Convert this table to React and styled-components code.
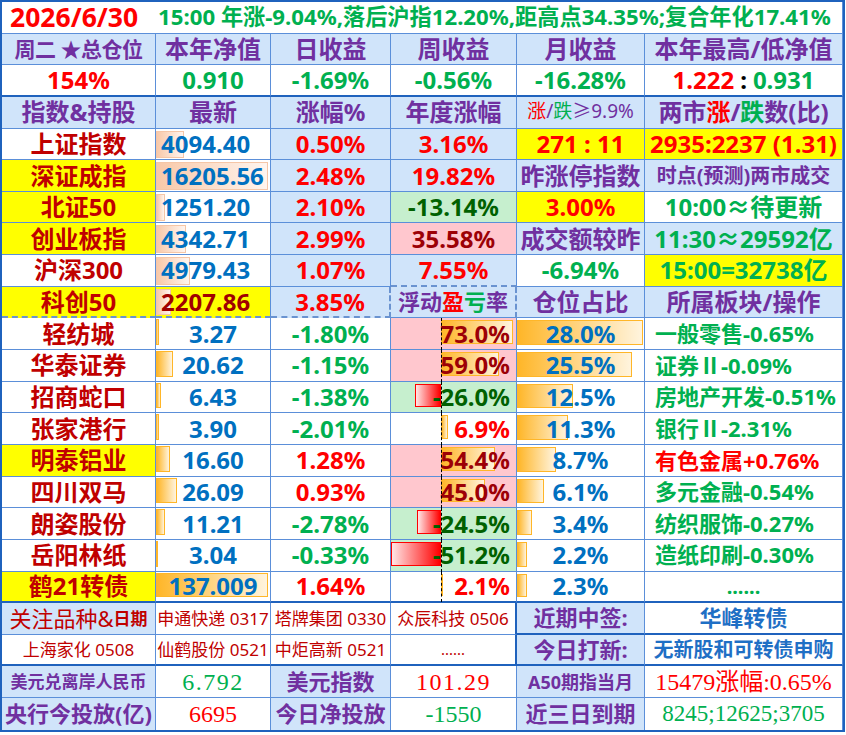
import React from 'react';
import styled, { createGlobalStyle } from 'styled-components';

// #region colours
const LINE = '#5b8fd9';
const EDGE = '#1f62bd';
const DASH = '#6a93d0';
const HEAD = '#d0e4fa';
const YELLOW = '#ffff00';
const WHITE = '#ffffff';
const PURPLE = '#7030a0';
const RED = '#ff0000';
const DARKRED = '#c00000';
const MAROON = '#a00000';
const GREEN = '#00b050';
const BLUE = '#0070c0';
const NAVY = '#1f6fc5';
const PINK_BG = '#ffc7ce';
const PINK_TXT = '#9c0006';
const MINT_BG = '#c6efce';
const MINT_TXT = '#006100';

const SANS = '"Noto Sans", "Noto Sans CJK SC", sans-serif';
const SERIF = '"Liberation Serif", "Noto Sans CJK SC", serif';
// #endregion

// #region data
const summaryHeads = ['本年净值', '日收益', '周收益', '月收益'];
const summaryValues = ['0.910', '-1.69%', '-0.56%', '-16.28%'];

const indexRows = [
  {
    name: '上证指数', nameBg: WHITE, last: '4094.40', chg: '0.50%',
    ytd: { text: '3.16%', bg: HEAD, color: RED },
    c5: { text: '271 : 11', bg: YELLOW, color: RED },
    c6: { text: '2935:2237 (1.31)', bg: YELLOW, color: RED },
  },
  {
    name: '深证成指', nameBg: YELLOW, last: '16205.56', chg: '2.48%',
    ytd: { text: '19.82%', bg: HEAD, color: RED },
    c5: { text: '昨涨停指数', bg: HEAD, color: PURPLE },
    c6: { text: '时点(预测)两市成交', bg: HEAD, color: PURPLE, size: 20 },
  },
  {
    name: '北证50', nameBg: YELLOW, last: '1251.20', chg: '2.10%',
    ytd: { text: '-13.14%', bg: MINT_BG, color: MINT_TXT },
    c5: { text: '3.00%', bg: YELLOW, color: RED },
    c6: { text: '10:00≈待更新', bg: WHITE, color: GREEN },
  },
  {
    name: '创业板指', nameBg: YELLOW, last: '4342.71', chg: '2.99%',
    ytd: { text: '35.58%', bg: PINK_BG, color: PINK_TXT },
    c5: { text: '成交额较昨', bg: HEAD, color: PURPLE },
    c6: { text: '11:30≈29592亿', bg: HEAD, color: GREEN },
  },
  {
    name: '沪深300', nameBg: WHITE, last: '4979.43', chg: '1.07%',
    ytd: { text: '7.55%', bg: HEAD, color: RED },
    c5: { text: '-6.94%', bg: WHITE, color: GREEN },
    c6: { text: '15:00=32738亿', bg: YELLOW, color: GREEN },
  },
];

const holdings = [
  { name: '轻纺城', bg: WHITE, price: '3.27', chg: '-1.80%', pnl: 73.0, weight: 28.0, sector: '一般零售-0.65%' },
  { name: '华泰证券', bg: WHITE, price: '20.62', chg: '-1.15%', pnl: 59.0, weight: 25.5, sector: '证券Ⅱ-0.09%' },
  { name: '招商蛇口', bg: WHITE, price: '6.43', chg: '-1.38%', pnl: -26.0, weight: 12.5, sector: '房地产开发-0.51%' },
  { name: '张家港行', bg: WHITE, price: '3.90', chg: '-2.01%', pnl: 6.9, weight: 11.3, sector: '银行Ⅱ-2.31%' },
  { name: '明泰铝业', bg: YELLOW, price: '16.60', chg: '1.28%', pnl: 54.4, weight: 8.7, sector: '有色金属+0.76%' },
  { name: '四川双马', bg: WHITE, price: '26.09', chg: '0.93%', pnl: 45.0, weight: 6.1, sector: '多元金融-0.54%' },
  { name: '朗姿股份', bg: WHITE, price: '11.21', chg: '-2.78%', pnl: -24.5, weight: 3.4, sector: '纺织服饰-0.27%' },
  { name: '岳阳林纸', bg: WHITE, price: '3.04', chg: '-0.33%', pnl: -51.2, weight: 2.2, sector: '造纸印刷-0.30%' },
  { name: '鹤21转债', bg: YELLOW, price: '137.009', chg: '1.64%', pnl: 2.1, weight: 2.3, sector: '......' },
];

const macroRows = [
  [
    { text: '美元兑离岸人民币', size: 17 },
    { text: '6.792', color: GREEN, track: 1.5 },
    { text: '美元指数', size: 22 },
    { text: '101.29', color: RED, track: 1.5 },
    { text: 'A50期指当月', size: 18 },
    { text: '15479涨幅:0.65%', color: RED },
  ],
  [
    { text: '央行今投放(亿)', size: 22 },
    { text: '6695', color: RED },
    { text: '今日净投放', size: 22 },
    { text: '-1550', color: GREEN },
    { text: '近三日到期', size: 22 },
    { text: '8245;12625;3705', color: GREEN, size: 23 },
  ],
];
// #endregion

// #region styled components
const GlobalStyle = createGlobalStyle`
  html, body { margin: 0; padding: 0; background: #fff; }
  body { font-family: ${SANS}; }
`;

const Sheet = styled.div`
  display: grid;
  grid-template-columns: 154px 115px 120px 126px 128px 198px;
  grid-auto-rows: 31.65px;
  width: max-content;
  border: 2px solid ${EDGE};
`;

const borderFor = kind => {
  switch (kind) {
    case 'thick':
      return `2px solid ${EDGE}`;
    case 'dash':
      return `2px dashed ${DASH}`;
    case 'none':
      return 'none';
    default:
      return `1px solid ${LINE}`;
  }
};

const Cell = styled.div`
  position: relative;
  box-sizing: border-box;
  min-width: 0;
  grid-column: span ${p => p.$span || 1};
  display: flex;
  align-items: center;
  justify-content: ${p => p.$align || 'center'};
  gap: ${p => p.$gap || 0}px;
  padding: ${p => p.$pad || '0'};
  background: ${p => p.$bg || WHITE};
  color: ${p => p.$color || '#000'};
  font-family: ${p => (p.$serif ? SERIF : SANS)};
  font-size: ${p => p.$size || 24}px;
  font-weight: ${p => p.$weight || 700};
  line-height: 1.25;
  white-space: nowrap;
  border-right: ${p => borderFor(p.$br)};
  border-bottom: ${p => borderFor(p.$bb)};
`;

const PnlCell = styled(Cell)`
  &::before {
    content: '';
    position: absolute;
    left: 50px;
    top: 0;
    bottom: -1px;
    border-left: 1px dashed #000;
    z-index: 2;
  }
`;

const Label = styled.span`
  position: relative;
  z-index: 1;
  letter-spacing: ${p => p.$track || 0}px;
`;

const Tint = styled.span`
  color: ${p => p.$color || 'inherit'};
  font-size: ${p => (p.$size ? `${p.$size}px` : 'inherit')};
  font-weight: ${p => p.$weight || 'inherit'};
`;

const BAR_FILL = {
  peach: ['#f8c8a8', '#fff5ef', '#f5c6a7'],
  orange: ['#ffb628', '#fff4de', '#ffb628'],
  loss: ['#ffe6e6', '#ff0000', '#ff0000'],
};

const Bar = styled.span`
  position: absolute;
  top: ${p => p.$top}px;
  bottom: ${p => p.$bottom}px;
  box-sizing: border-box;
  background: linear-gradient(
    to right,
    ${p => BAR_FILL[p.$tone][0]},
    ${p => BAR_FILL[p.$tone][1]}
  );
  border: 1px solid ${p => BAR_FILL[p.$tone][2]};
`;
// #endregion

const pnlTone = v => {
  if (v < 0) return { bg: MINT_BG, color: MINT_TXT };
  if (v >= 10) return { bg: PINK_BG, color: PINK_TXT };
  return { bg: WHITE, color: RED };
};

function PnlBar({ value }) {
  const width = Math.abs(value) * 0.985;
  if (value < 0) {
    return <Bar $tone="loss" $top={2} $bottom={5} style={{ right: 'calc(100% - 50px)', width }} />;
  }
  return <Bar $tone="orange" $top={2} $bottom={5} style={{ left: 50, width }} />;
}

function RiseFall({ children }) {
  return (
    <>
      <Tint $color={RED}>涨</Tint>/<Tint $color={GREEN}>跌</Tint>
      {children}
    </>
  );
}

export default function App() {
  return (
    <>
      <GlobalStyle />
      <Sheet>
        {/* title */}
        <Cell $span={6} $align="flex-start" $pad="0 0 0 8px" $gap={20} $color={GREEN} $size={22.2}>
          <Tint $color={RED} $size={26.5}>2026/6/30</Tint>
          <span>15:00 年涨-9.04%,落后沪指12.20%,距高点34.35%;复合年化17.41%</span>
        </Cell>

        {/* account summary */}
        <Cell $bg={HEAD} $color={PURPLE} $size={21}>
          <Label $track={-0.5}>周二 ★总仓位</Label>
        </Cell>
        {summaryHeads.map(h => (
          <Cell key={h} $bg={HEAD} $color={PURPLE}>{h}</Cell>
        ))}
        <Cell $bg={HEAD} $color={PURPLE}>本年最高/低净值</Cell>

        <Cell $color={RED} $bb="thick">154%</Cell>
        {summaryValues.map(v => (
          <Cell key={v} $color={GREEN} $bb="thick">{v}</Cell>
        ))}
        <Cell $bb="thick" $gap={6}>
          <Tint $color={RED}>1.222</Tint>:<Tint $color={GREEN}>0.931</Tint>
        </Cell>

        {/* indices */}
        <Cell $bg={HEAD} $color={PURPLE}>指数&amp;持股</Cell>
        <Cell $bg={HEAD} $color={PURPLE}>最新</Cell>
        <Cell $bg={HEAD} $color={PURPLE}>涨幅%</Cell>
        <Cell $bg={HEAD} $color={PURPLE}>年度涨幅</Cell>
        <Cell $bg={HEAD} $color={PURPLE} $size={19} $weight={400}>
          <RiseFall>≥9.9%</RiseFall>
        </Cell>
        <Cell $bg={HEAD} $color={PURPLE}>
          两市<RiseFall>数(比)</RiseFall>
        </Cell>

        {indexRows.map((row, i) => (
          <React.Fragment key={row.name}>
            <Cell $bg={row.nameBg} $color={DARKRED}>{row.name}</Cell>
            <Cell $align="flex-start" $pad="0 0 0 5px" $color={BLUE}>
              <Bar $tone="peach" $top={2} $bottom={1} style={{ left: 0, width: parseFloat(row.last) * 0.0069 }} />
              <Label>{row.last}</Label>
            </Cell>
            <Cell $bg={HEAD} $color={RED}>{row.chg}</Cell>
            <Cell $bg={row.ytd.bg} $color={row.ytd.color} $bb={i === indexRows.length - 1 ? 'dash' : undefined}>
              {row.ytd.text}
            </Cell>
            <Cell $bg={row.c5.bg} $color={row.c5.color}>{row.c5.text}</Cell>
            <Cell $bg={row.c6.bg} $color={row.c6.color} $size={row.c6.size}>{row.c6.text}</Cell>
          </React.Fragment>
        ))}

        <Cell $bg={YELLOW} $color={DARKRED} $bb="dash">科创50</Cell>
        <Cell $bg={YELLOW} $align="flex-start" $pad="0 0 0 5px" $color={MAROON} $bb="dash">
          <Bar $tone="peach" $top={2} $bottom={1} style={{ left: 0, width: 2207.86 * 0.0069 }} />
          <Label>2207.86</Label>
        </Cell>
        <Cell $bg={HEAD} $color={RED} $bb="dash" $br="dash">3.85%</Cell>
        <Cell $bg={HEAD} $color={PURPLE} $size={22} $br="dash">
          浮动<Tint $color={RED}>盈</Tint><Tint $color={GREEN}>亏</Tint>率
        </Cell>
        <Cell $bg={HEAD} $color={PURPLE}>仓位占比</Cell>
        <Cell $bg={HEAD} $color={PURPLE}>所属板块/操作</Cell>

        {/* holdings */}
        {holdings.map((h, i) => {
          const tone = pnlTone(h.pnl);
          const edge = i === holdings.length - 1 ? 'thick' : undefined;
          const up = h.chg[0] !== '-';
          return (
            <React.Fragment key={h.name}>
              <Cell $bg={h.bg} $color={DARKRED} $bb={edge}>{h.name}</Cell>
              <Cell $color={BLUE} $bb={edge}>
                <Bar $tone="orange" $top={1} $bottom={4} style={{ left: 0, width: parseFloat(h.price) * 0.815 }} />
                <Label>{h.price}</Label>
              </Cell>
              <Cell $color={up ? RED : GREEN} $bb={edge}>{h.chg}</Cell>
              <PnlCell $bg={tone.bg} $color={tone.color} $align="flex-end" $pad="0 6px 0 0" $bb={edge}>
                <PnlBar value={h.pnl} />
                <Label>{h.pnl.toFixed(1)}%</Label>
              </PnlCell>
              <Cell $color={BLUE} $bb={edge}>
                <Bar $tone="orange" $top={2} $bottom={4} style={{ left: 0, width: h.weight * 4.5 }} />
                <Label>{h.weight.toFixed(1)}%</Label>
              </Cell>
              {h.sector === '......' ? (
                <Cell $color={GREEN} $size={20} $bb={edge}>{h.sector}</Cell>
              ) : (
                <Cell
                  $align="flex-start"
                  $pad="0 0 0 10px"
                  $size={22}
                  $color={h.sector.includes('+') ? RED : GREEN}
                  $bb={edge}
                >
                  {h.sector}
                </Cell>
              )}
            </React.Fragment>
          );
        })}

        {/* watch list & IPO */}
        <Cell $bg={HEAD} $color={DARKRED} $size={22} $weight={400}>
          关注品种&amp;<Tint $size={17} $weight={700}>日期</Tint>
        </Cell>
        <Cell $color={DARKRED} $size={17} $weight={400}>申通快递 0317</Cell>
        <Cell $color={DARKRED} $size={17} $weight={400}>塔牌集团 0330</Cell>
        <Cell $color={DARKRED} $size={17} $weight={400} $br="thick">众辰科技 0506</Cell>
        <Cell $bg={HEAD} $color={PURPLE} $size={22} $bb="thick">近期中签:</Cell>
        <Cell $color={NAVY} $size={22} $bb="thick">华峰转债</Cell>

        <Cell $color={DARKRED} $size={17} $weight={400} $bb="thick">上海家化 0508</Cell>
        <Cell $color={DARKRED} $size={17} $weight={400} $bb="thick">仙鹤股份 0521</Cell>
        <Cell $color={DARKRED} $size={17} $weight={400} $bb="thick">中炬高新 0521</Cell>
        <Cell $color={DARKRED} $size={15} $weight={400} $br="thick" $bb="thick">......</Cell>
        <Cell $bg={HEAD} $color={PURPLE} $size={22} $bb="thick">今日打新:</Cell>
        <Cell $color={NAVY} $size={20} $bb="thick">无新股和可转债申购</Cell>

        {/* macro */}
        {macroRows.map((row, r) =>
          row.map((c, i) =>
            i % 2 === 0 ? (
              <Cell key={`${r}-${i}`} $bg={HEAD} $color={PURPLE} $size={c.size} $bb={r === 1 ? 'none' : undefined}>
                {c.text}
              </Cell>
            ) : (
              <Cell
                key={`${r}-${i}`}
                $serif
                $weight={400}
                $size={c.size || 24}
                $color={c.color}
                $bb={r === 1 ? 'none' : undefined}
              >
                <Label $track={c.track}>{c.text}</Label>
              </Cell>
            ),
          ),
        )}
      </Sheet>
    </>
  );
}
